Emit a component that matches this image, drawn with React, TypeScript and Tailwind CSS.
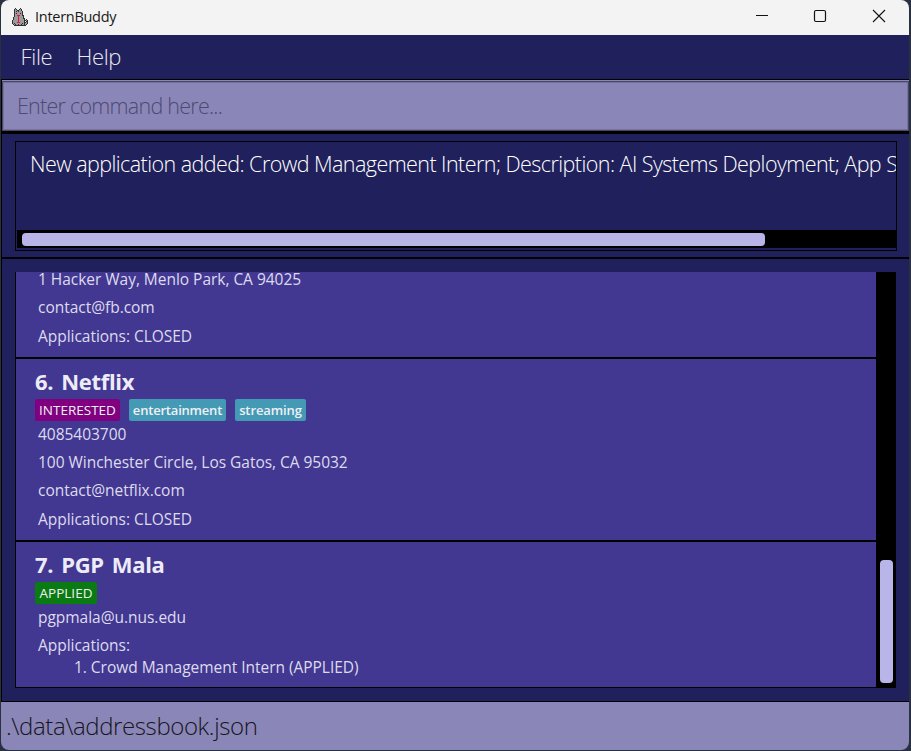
import React from "react";

const catRows = [
  "...k....k.......",
  "..kgk..kgk......",
  "..kggkkggk......",
  "..kgkgkgggk.....",
  "..kgggggggk.....",
  "..kgkgggkgk.....",
  "..kgggggggk.....",
  "..kggrrrggkk....",
  "..kgggrggggk....",
  ".kggggrggggk....",
  ".kggggrggggkk...",
  ".kggggrgggggk.k.",
  "kgggggrgggggkkgk",
  "kgggggrgggggk.kk",
  "kggggrrrggggkkgk",
  "kgkgggggggkgkggk",
  ".kgkggkggkggkgk.",
  "..kkkkkkkkkkkk..",
];
const catColors: Record<string, string> = { k: "#303030", g: "#9b9b9b", r: "#f0123c" };

function CatIcon() {
  return (
    <svg width="16" height="18" viewBox="0 0 16 18" shapeRendering="crispEdges">
      {catRows.flatMap((row, y) =>
        row.split("").map((c, x) =>
          c === "." ? null : <rect key={`${x}-${y}`} x={x} y={y} width="1" height="1" fill={catColors[c]} />
        )
      )}
    </svg>
  );
}

function TitleBar() {
  return (
    <header className="flex h-[35px] shrink-0 items-center bg-[#f3f3f3] pb-[2px] pl-[11px]">
      <CatIcon />
      <span className="ml-[7px] text-[14.5px] leading-[20px] tracking-[-0.28px] text-[#191919]">InternBuddy</span>
      <svg className="ml-auto mt-[2px]" width="153" height="35" viewBox="0 0 153 35" fill="none" stroke="#111" strokeWidth="1">
        <path d="M0 15.5h12" />
        <rect x="58.5" y="10.5" width="11" height="11" rx="1.5" strokeWidth="1.2" />
        <path d="M117 10l12 12M129 10l-12 12" strokeWidth="1.1" />
      </svg>
    </header>
  );
}

function Tag({ className, children }: { className: string; children: string }) {
  return (
    <span className={`flex h-[22px] items-center justify-center whitespace-nowrap rounded-[2px] pt-px text-[#f0f0f4] ${className}`}>
      {children}
    </span>
  );
}

function Row({ className = "", children }: { className?: string; children: string }) {
  return (
    <div className={`h-[22px] whitespace-pre text-[15.5px] leading-[22px] tracking-[-0.03px] text-[#dddbee] ${className}`}>
      {children}
    </div>
  );
}

function CompanyName({ children }: { children: string }) {
  return (
    <h2 className="h-[33px] text-[22px] font-bold leading-[30px] tracking-[-0.3px] text-[#edecf6] [word-spacing:2.5px]">
      {children}
    </h2>
  );
}

export default function App() {
  return (
    <div className="h-[751px] w-[911px] overflow-hidden bg-[#29303f] pb-px pl-px pr-[2px] font-['Open_Sans','Noto_Sans',sans-serif]">
      <div className="flex h-[750px] flex-col overflow-hidden rounded-[8px] bg-[#20215c]">
        <TitleBar />
        <nav className="flex h-[45px] shrink-0 gap-[24px] border-b border-black pl-[19.5px] text-[22px] font-light leading-[43px] tracking-[-0.3px] text-[#e9e9ef]">
          <span>File</span>
          <span>Help</span>
        </nav>
        <div className="h-[54px] shrink-0 border-b-[3px] border-l border-black bg-[#8b86b8] pt-px">
          <div className="h-[50px] border border-[#4a485f] pl-[14px] text-[21.5px] font-light leading-[48px] tracking-[-0.75px] text-[#4b4a72] shadow-[inset_0_0_0_1px_#7571a0]">
            Enter command here...
          </div>
        </div>
        <section className="h-[125px] shrink-0 border-b-2 border-l border-black pl-[13px] pr-[12px] pt-[7px]">
          <div className="flex h-[110px] flex-col overflow-hidden border border-black pb-[2px] pl-px">
            <div className="flex-1 overflow-hidden whitespace-nowrap pl-[13px] pt-px text-[21.5px] font-light leading-[41px] tracking-[-0.56px] text-white">
              New application added: Crowd Management Intern; Description: AI Systems Deployment; App S
            </div>
            <div className="h-[18px] bg-black pl-[5px] pt-[3px]">
              <div className="h-[13px] w-[743px] rounded-[4px] bg-[#bab5e9]" />
            </div>
          </div>
        </section>
        <main className="flex h-[443px] shrink-0 border-b border-l border-black p-[13px]">
          <div className="flex h-[416px] flex-1 flex-col justify-end overflow-hidden border-b border-l border-black bg-[#433891]">
            <article className="shrink-0 border-b-2 border-black pb-[10px] pl-[22px]">
              <div className="flex flex-col">
                <Row className="mb-[6px]">1 Hacker Way, Menlo Park, CA 94025</Row>
                <Row className="mb-[7px]">contact@fb.com</Row>
                <Row>Applications: CLOSED</Row>
              </div>
            </article>
            <article className="h-[183px] shrink-0 border-b-2 border-black pl-[19px] pt-[7px]">
              <CompanyName>6. Netflix</CompanyName>
              <div className="flex gap-[9px]">
                <Tag className="w-[85px] bg-[#800080] text-[13.5px] font-medium">INTERESTED</Tag>
                <Tag className="w-[97px] bg-[#449ab4] text-[13px] font-semibold tracking-[-0.2px]">entertainment</Tag>
                <Tag className="w-[71px] bg-[#449ab4] text-[13px] font-semibold tracking-[-0.1px]">streaming</Tag>
              </div>
              <div className="mt-[2px] flex flex-col pl-[3px]">
                <Row className="mb-[6px]">4085403700</Row>
                <Row className="mb-[6px]">100 Winchester Circle, Los Gatos, CA 95032</Row>
                <Row className="mb-[7px]">contact@netflix.com</Row>
                <Row>Applications: CLOSED</Row>
              </div>
            </article>
            <article className="h-[145px] shrink-0 pl-[19px] pt-[7px]">
              <CompanyName>7. PGP Mala</CompanyName>
              <div className="flex">
                <Tag className="w-[62px] bg-[#0a7a12] text-[13.5px] font-medium">APPLIED</Tag>
              </div>
              <div className="mt-[2px] flex flex-col pl-[3px]">
                <Row className="mb-[6px]">pgpmala@u.nus.edu</Row>
                <Row>Applications:</Row>
                <Row className="pl-[36px]">1. Crowd Management Intern (APPLIED)</Row>
              </div>
            </article>
          </div>
          <div className="flex h-[416px] w-[20px] flex-col justify-end bg-black pb-[5px] pl-[4px]">
            <div className="h-[123px] w-[13px] rounded-[4px] bg-[#bab5e9]" />
          </div>
        </main>
        <footer className="h-[48px] bg-[#8b86b8] pl-[5px] text-[24px] font-light leading-[47px] tracking-[-0.4px] text-[#16161c]">
          .\data\addressbook.json
        </footer>
      </div>
    </div>
  );
}
